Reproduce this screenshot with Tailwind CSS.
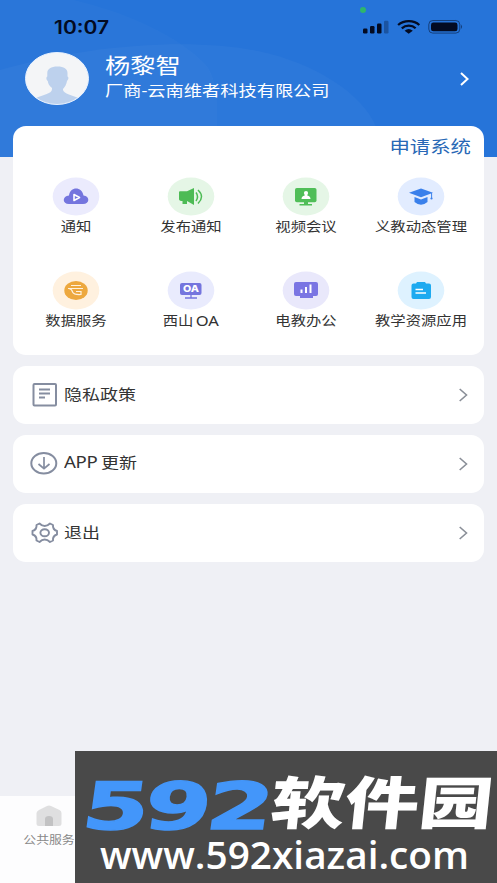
<!DOCTYPE html>
<html lang="zh-CN">
<head>
<meta charset="utf-8">
<meta name="viewport" content="width=device-width, initial-scale=1">
<title>我的</title>
<script src="https://cdn.jsdelivr.net/npm/@tailwindcss/browser@4"></script>
</head>
<body class="relative h-[883px] w-[497px] overflow-hidden bg-[#eff0f5] font-['Noto_Sans','Noto_Sans_CJK_SC',sans-serif] text-[#333]">
<header class="relative h-[157px] overflow-hidden bg-[#2674d9] text-white">
  <svg class="absolute inset-0" width="497" height="157" viewBox="0 0 497 157"><path d="M0 0H74C125 12 178 35 206 65C220 83 218 112 216 157H0Z" fill="#fff" fill-opacity=".02"/><path d="M0 70C85 45 190 37 258 51C315 63 363 94 376 127V157H0Z" fill="#fff" fill-opacity=".03"/></svg>
  <div class="relative flex h-[52px] items-start justify-between pl-[53px] pr-[34px] pt-[15px] text-[#030b22]">
    <svg width="58" height="24" viewBox="0 0 58 24"><text x="1" y="18.6" font-family="Inter, sans-serif" font-size="18" font-weight="600" textLength="55" lengthAdjust="spacingAndGlyphs" fill="currentColor">10:07</text></svg>
    <svg class="mt-[4px]" width="101" height="16" viewBox="0 0 101 16" fill="currentColor"><rect x="1" y="9.5" width="4.5" height="5" rx="1.2"/><rect x="8" y="7" width="4.5" height="7.5" rx="1.2"/><rect x="15" y="4.5" width="4.5" height="10" rx="1.2"/><rect x="22" y="1.8" width="4.5" height="12.7" rx="1.2" opacity=".3"/><g fill="none" stroke="currentColor" stroke-width="2.3"><path d="M36.1 6C42 .8 51.800 .8 57.300 6"/><path d="M39.800 9.300C43.700 5.800 50 5.800 53.600 9.300"/></g><path d="M42.600 11.700Q46.700 8.500 50.800 11.700L46.700 14.800Z"/><rect x="66.800" y="1.500" width="31" height="12.600" rx="4" fill="none" stroke="currentColor" opacity=".5"/><rect x="69" y="3.500" width="26.500" height="8.800" rx="2.400"/><path d="M99 5.500Q101.200 7.800 99 10Z" opacity=".5"/></svg>
  </div>
  <i class="absolute left-[360px] top-[7px] h-[6px] w-[6px] rounded-full bg-[#2eb66d]"></i>
  <div class="relative flex h-[54px] items-center pl-[25px] pr-[28px]">
    <svg width="64" height="54" viewBox="0 0 64 54"><defs><clipPath id="avatar"><ellipse cx="32" cy="26.500" rx="31" ry="25.500"/></clipPath></defs><ellipse cx="32" cy="26.500" rx="31.500" ry="26" fill="#f4f5f7" stroke="#e7f1ff"/><path clip-path="url(#avatar)" d="M10 47C17 42 28 43 27 36C24 34 23 31 22.800 29C21 28 21 25 22.300 24.500V21C22.300 17 26 14.500 32.500 14.500S42.500 17 42.500 21V24.500C44 25 43.500 28 42 29C41.500 32 40 35 38 37C37 42 48 43 55 47V54H10Z" fill="#bdd1ed"/></svg>
    <div class="ml-[16px] flex-1 whitespace-nowrap pb-[5px]">
      <div class="h-[27px] w-fit origin-left scale-x-[1.2] text-[21px] leading-[27px]">杨黎智</div>
      <div class="h-[22px] w-fit origin-left scale-x-[1.215] text-[15px] leading-[23px]">厂商-云南维者科技有限公司</div>
    </div>
    <svg width="9" height="16" viewBox="0 0 9 16" fill="none" stroke="white" stroke-width="2"><path d="M1 2L7.500 8L1 14"/></svg>
  </div>
</header>

<main class="relative -mt-[31px] flex flex-col gap-[11px] px-[13px]">
  <section class="h-[229px] rounded-[13px] bg-white">
    <div class="flex h-[51px] justify-end pr-[13px] pt-[8px]"><a class="h-[26px] origin-right scale-x-[1.2] text-[17px] leading-[26px] text-[#2868b6]">申请系统</a></div>
    <div class="ml-[6px] grid w-[459px] grid-cols-4 gap-y-[24px] whitespace-nowrap text-[13px]">
      <div class="flex h-[70px] flex-col items-center"><svg width="48" height="39" viewBox="0 0 48 39"><ellipse cx="24" cy="19.500" rx="23.300" ry="19" fill="#ebebfd"/><path d="M17 27C10 27 10 19 17 18.500C18 9 30 9 31.500 18.500C38 19 38 27 31 27Z" fill="#7475de"/><path d="M22 17.500L27.500 20.500L22 23.500Z" fill="none" stroke="white" stroke-width="1.600" stroke-linejoin="round"/></svg><span class="scale-x-[1.18] leading-[20px]">通知</span></div>
      <div class="flex h-[70px] flex-col items-center"><svg width="48" height="39" viewBox="0 0 48 39"><ellipse cx="24" cy="19.500" rx="23.300" ry="19" fill="#e5f6e6"/><path d="M12 15Q12 14.300 13 14.300H20L27 11V28L20 24V27H15.500V24Q12 24 12 22Z" fill="#4dbb55"/><path d="M29 15.500Q32 19.500 29 24M31 13Q38 19.500 31 26.500" fill="none" stroke="#4dbb55" stroke-width="1.500"/></svg><span class="scale-x-[1.18] leading-[20px]">发布通知</span></div>
      <div class="flex h-[70px] flex-col items-center"><svg width="48" height="39" viewBox="0 0 48 39"><ellipse cx="24" cy="19.500" rx="23.300" ry="19" fill="#e5f6e6"/><rect x="13" y="11" width="21.500" height="14.300" rx="1.800" fill="#50be58"/><path d="M22 25H26V27H30V28.500H17.500V27H22Z" fill="#50be58"/><circle cx="24" cy="16" r="2.100" fill="white"/><path d="M22.700 16H25.300V18.500Q28.500 19 28.500 22H19.500Q19.500 19 22.700 18.500Z" fill="white"/></svg><span class="scale-x-[1.18] leading-[20px]">视频会议</span></div>
      <div class="flex h-[70px] flex-col items-center"><svg width="48" height="39" viewBox="0 0 48 39"><ellipse cx="24" cy="19.500" rx="23.300" ry="19" fill="#e2ecff"/><path d="M12 15.800L24 11.500L36 15.800L24 20.300Z" fill="#3a80eb"/><path d="M17.500 20V25Q24 30.500 30.500 25V20L24 22.500Z" fill="#3a80eb"/><path d="M34.600 16V21" stroke="#3a80eb"/><circle cx="34.500" cy="21.500" r="1.100" fill="#3a80eb"/></svg><span class="scale-x-[1.18] leading-[20px]">义教动态管理</span></div>
      <div class="flex h-[70px] flex-col items-center"><svg width="48" height="39" viewBox="0 0 48 39"><ellipse cx="24" cy="19.500" rx="23.300" ry="19" fill="#fff1df"/><ellipse cx="24" cy="19.500" rx="11.700" ry="9.500" fill="#eda83e"/><path d="M19 14.500H29M16 17.500H31M17 17.500Q20 18 20.500 21Q22 24 29 23.500V20.500H24" fill="none" stroke="#fff2df" stroke-width="1.200"/></svg><span class="scale-x-[1.18] leading-[20px]">数据服务</span></div>
      <div class="flex h-[70px] flex-col items-center"><svg width="48" height="39" viewBox="0 0 48 39"><ellipse cx="24" cy="19.500" rx="23.300" ry="19" fill="#e9ebfd"/><rect x="13" y="12" width="21.500" height="12" rx="2" fill="#7475de"/><path d="M24 24V27M18 27H30" stroke="#7475de" stroke-width="1.300"/><text x="16" y="21.200" fill="white" font-family="Inter, sans-serif" font-size="9" font-weight="800" textLength="16" lengthAdjust="spacingAndGlyphs">OA</text></svg><span class="scale-x-[1.18] leading-[20px]">西山<span class="relative top-[.5px] ml-[2px] text-[14px]">OA</span></span></div>
      <div class="flex h-[70px] flex-col items-center"><svg width="48" height="39" viewBox="0 0 48 39"><ellipse cx="24" cy="19.500" rx="23.300" ry="19" fill="#e9e8fb"/><rect x="12" y="11" width="24" height="14" rx="2" fill="#7a75e3"/><path d="M18 24H31V27H18Z" fill="#7a75e3"/><path d="M19.500 18.500V22M24 16V22M28.500 13.500V22" stroke="white" stroke-width="2"/></svg><span class="scale-x-[1.18] leading-[20px]">电教办公</span></div>
      <div class="flex h-[70px] flex-col items-center"><svg width="48" height="39" viewBox="0 0 48 39"><ellipse cx="24" cy="19.500" rx="23.300" ry="19" fill="#def2ff"/><path d="M14.500 14.500Q14.500 12.500 16.500 12.500H19L20 11H28L29 12.500H32Q34 12.500 34 14.500V26Q34 28 32 28H16.500Q14.500 28 14.500 26Z" fill="#1eaaf0"/><path d="M18.500 18.500H26M18.500 22H29" stroke="white" stroke-width="1.400"/></svg><span class="scale-x-[1.18] leading-[20px]">教学资源应用</span></div>
    </div>
  </section>
  <a class="flex h-[58px] items-center rounded-[13px] bg-white pl-[17px] pr-[16px]"><svg width="30" height="26" viewBox="0 0 30 26" fill="none" stroke="#858da0" stroke-width="2"><rect x="3.500" y="2" width="22.500" height="21.500" rx="1"/><path d="M9 7.500H20M9 11.500H20M9 15.500H15" stroke-width="1.800"/></svg><span class="ml-[4px] mr-auto origin-left scale-x-[1.2] pb-[2px] text-[15px]">隐私政策</span><svg width="9" height="16" viewBox="0 0 9 16" fill="none" stroke="#8a8f98" stroke-width="1.600"><path d="M.7 2L7.500 8L.7 14"/></svg></a>
  <a class="flex h-[58px] items-center rounded-[13px] bg-white pl-[17px] pr-[16px]"><svg width="30" height="26" viewBox="0 0 30 26" fill="none" stroke="#858da0" stroke-width="2"><ellipse cx="13.800" cy="12.200" rx="12.500" ry="10.200"/><path d="M14 6V17.500M8.500 13L14 17.700L19.500 13" stroke-width="1.700"/></svg><span class="ml-[4px] mr-auto origin-left scale-x-[1.2] pb-[2px] text-[15px]"><span class="text-[15.5px] tracking-[-.3px]">APP</span><span class="ml-[3px]">更新</span></span><svg width="9" height="16" viewBox="0 0 9 16" fill="none" stroke="#8a8f98" stroke-width="1.600"><path d="M.7 2L7.500 8L.7 14"/></svg></a>
  <a class="flex h-[58px] items-center rounded-[13px] bg-white pl-[17px] pr-[16px]"><svg width="30" height="26" viewBox="0 0 30 26" fill="none" stroke="#858da0" stroke-width="1.900" stroke-linejoin="round"><path d="M9.500 3.500Q12 6 14.700 6T20 3.500L23 5Q22.500 9.500 27 11V14.500Q22.500 16 23 20.500L20 22Q17.500 19.500 14.700 19.500T9.500 22L6.500 20.500Q7 16 2.500 14.500V11Q7 9.500 6.500 5Z"/><ellipse cx="14.700" cy="12.800" rx="4.300" ry="3.500"/></svg><span class="ml-[4px] mr-auto origin-left scale-x-[1.2] pb-[2px] text-[15px]">退出</span><svg width="9" height="16" viewBox="0 0 9 16" fill="none" stroke="#8a8f98" stroke-width="1.600"><path d="M.7 2L7.500 8L.7 14"/></svg></a>
</main>

<nav class="absolute bottom-0 left-0 h-[87px] w-full bg-[#fdfdfe]">
  <div class="flex w-[98px] flex-col items-center pt-[8px] text-[11px] text-[#888]"><svg width="28" height="24" viewBox="0 0 28 24"><path d="M1.500 9Q2 7 4 6L12 2Q14 1 16 2L24.500 6Q26.500 7 26.500 9V20Q26.500 22 24 22H4Q1.500 22 1.500 20Z" fill="#dfdfe0"/><path d="M10 22V15Q10 12 14 12T18 15V22Z" fill="#c2c2c3"/></svg><span class="scale-x-[1.17] whitespace-nowrap leading-[23px]">公共服务</span></div>
</nav>
<aside class="absolute left-[75px] top-[751px] h-[132px] w-[422px] bg-[#494949]">
  <svg width="422" height="132" viewBox="0 0 422 132">
    <text transform="translate(5 77.500) skewX(-8)" font-family="DejaVu Sans, sans-serif" font-size="65" font-weight="700" textLength="186" lengthAdjust="spacingAndGlyphs" letter-spacing="-3" fill="#4396fa" stroke="#4396fa" stroke-width="1.500">592</text>
    <text transform="translate(194 73) skewX(-6)" font-family="Noto Sans CJK SC, sans-serif" font-size="57" font-weight="900" textLength="222" lengthAdjust="spacingAndGlyphs" fill="white">软件园</text>
    <text x="25" y="118" font-family="Open Sans, sans-serif" font-size="37" font-weight="600" textLength="369" lengthAdjust="spacingAndGlyphs" fill="white">www.592xiazai.com</text>
  </svg>
</aside>
</body>
</html>
